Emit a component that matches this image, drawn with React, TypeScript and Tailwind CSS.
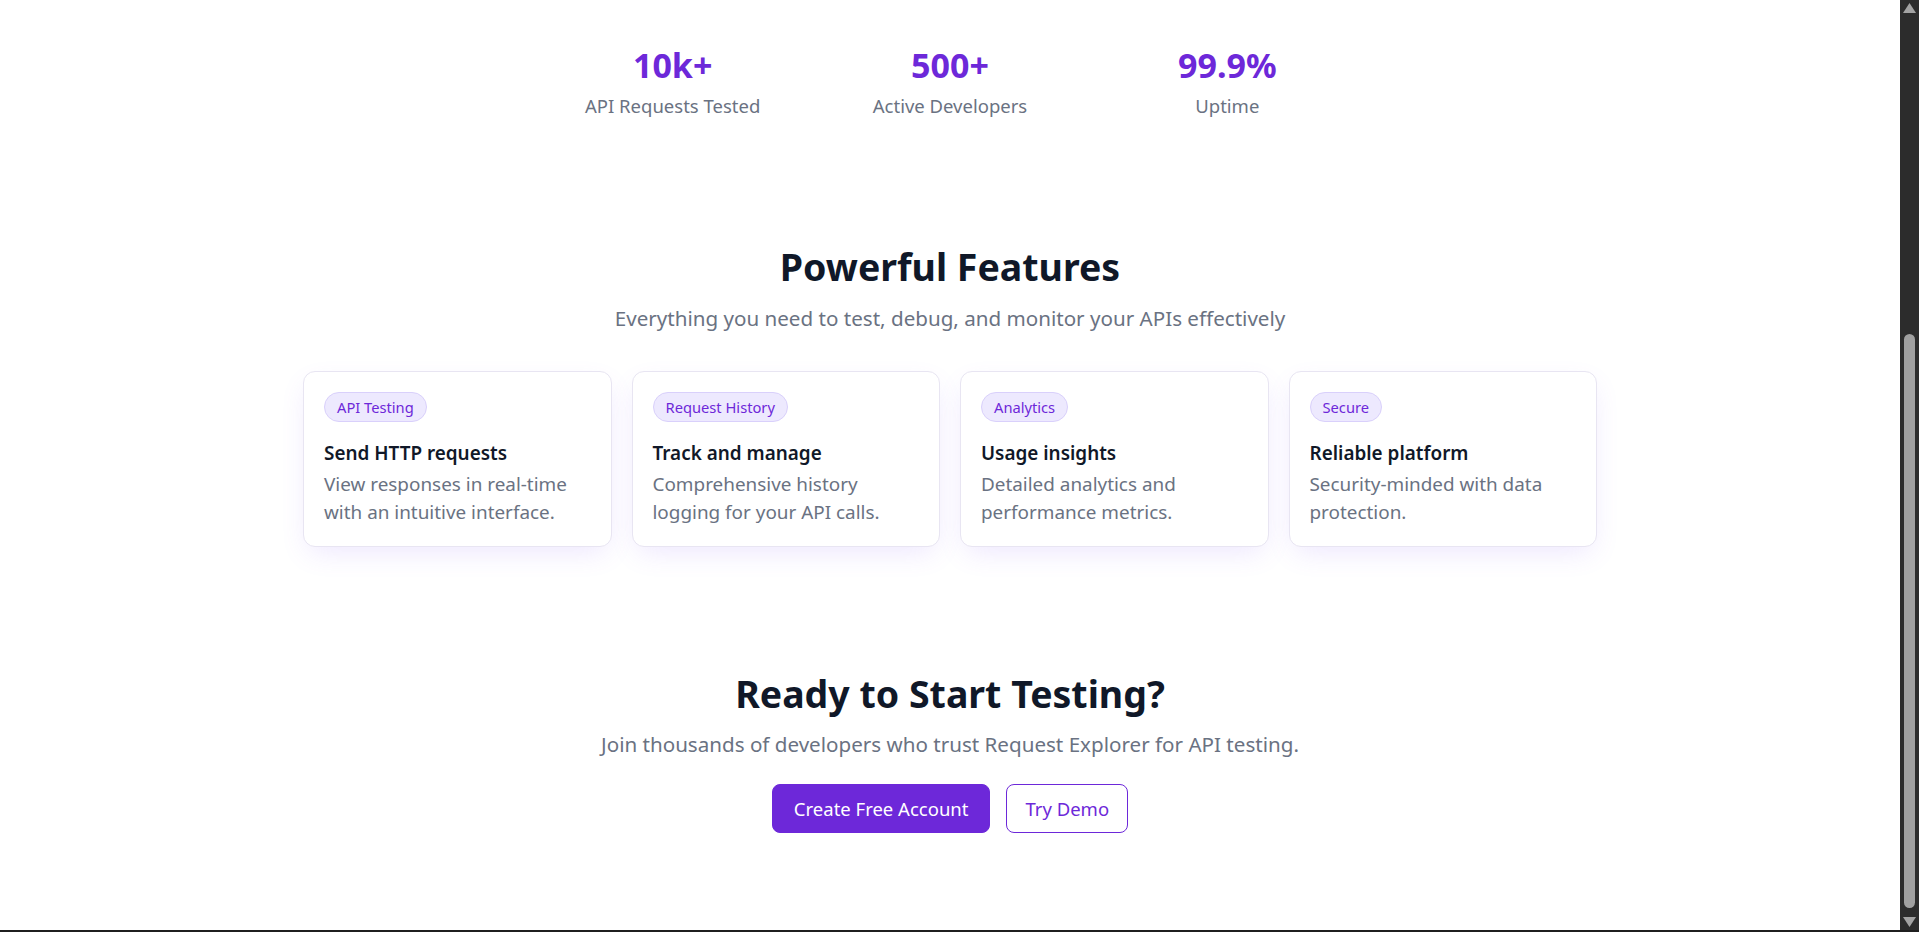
import React from "react";

const stats = [
  { value: "10k+", label: "API Requests Tested" },
  { value: "500+", label: "Active Developers" },
  { value: "99.9%", label: "Uptime" },
];

const features = [
  { tag: "API Testing", title: "Send HTTP requests", desc: "View responses in real-time with an intuitive interface." },
  { tag: "Request History", title: "Track and manage", desc: "Comprehensive history logging for your API calls." },
  { tag: "Analytics", title: "Usage insights", desc: "Detailed analytics and performance metrics." },
  { tag: "Secure", title: "Reliable platform", desc: "Security-minded with data protection." },
];

function Scrollbar() {
  return (
    <div className="flex w-[19px] shrink-0 flex-col items-center bg-[#2c2c2c] pt-[3px]">
      <svg width="13" height="10" viewBox="0 0 13 10">
        <polygon points="6.5,0 13,10 0,10" fill="#a3a3a3" />
      </svg>
      <div className="mt-[321px] h-[574px] w-[11px] rounded-full bg-[#a0a0a0]" />
      <svg className="mt-[9px]" width="13" height="10" viewBox="0 0 13 10">
        <polygon points="0,0 13,0 6.5,10" fill="#a3a3a3" />
      </svg>
    </div>
  );
}

export default function App() {
  return (
    <div className="flex h-[932px] w-full flex-col overflow-hidden bg-white font-['Noto_Sans','Open_Sans',sans-serif]">
      <div className="flex h-[930px] w-full">
        <main className="flex-1 overflow-hidden">
          <section className="pt-[46px]">
            <div className="mx-auto grid max-w-3xl grid-cols-3 gap-16 text-center">
              {stats.map((s) => (
                <div key={s.label}>
                  <div className="text-[34px] leading-[38px] font-bold text-[#6d28d9]">{s.value}</div>
                  <div className="mt-[8px] text-[18.5px] leading-7 text-gray-500">{s.label}</div>
                </div>
              ))}
            </div>
          </section>

          <section className="pt-[127px]">
            <div className="text-center">
              <h2 className="text-[37.5px] leading-10 font-bold text-gray-900">Powerful Features</h2>
              <p className="mt-[17px] text-[20.6px] leading-7 text-gray-500">
                Everything you need to test, debug, and monitor your APIs effectively
              </p>
            </div>
            <div className="mx-auto mt-[39px] grid max-w-[1294px] grid-cols-4 gap-5">
              {features.map((f) => (
                <div
                  key={f.tag}
                  className="rounded-xl border border-[#e8e5f2] bg-white p-5 shadow-[0_10px_28px_-6px_rgba(139,92,246,0.16)]"
                >
                  <span className="inline-flex rounded-full border border-[#d9d0fb] bg-[#ede9fe] px-3 py-1 text-[14.7px] leading-5 text-[#6d28d9]">
                    {f.tag}
                  </span>
                  <h3 className="mt-[17px] text-[18.9px] leading-7 font-semibold text-gray-900">{f.title}</h3>
                  <p className="mt-[3px] text-[18.9px] leading-7 text-gray-500">{f.desc}</p>
                </div>
              ))}
            </div>
          </section>

          <section className="pt-[127px] text-center">
            <h2 className="text-[37.5px] leading-10 font-bold text-gray-900">Ready to Start Testing?</h2>
            <p className="mt-4 text-[20.6px] leading-7 text-gray-500">
              Join thousands of developers who trust Request Explorer for API testing.
            </p>
            <div className="mt-[26px] flex justify-center gap-4">
              <button className="rounded-lg border border-[#6d28d9] bg-[#6d28d9] px-[21px] py-[10px] text-[18.5px] leading-[27px] text-white">
                Create Free Account
              </button>
              <button className="rounded-lg border border-[#6d28d9] bg-white px-[18px] py-[10px] text-[18.5px] leading-[27px] text-[#6d28d9]">
                Try Demo
              </button>
            </div>
          </section>
        </main>
        <Scrollbar />
      </div>
      <div className="h-[2px] w-full bg-[#1f1f1f]" />
    </div>
  );
}
